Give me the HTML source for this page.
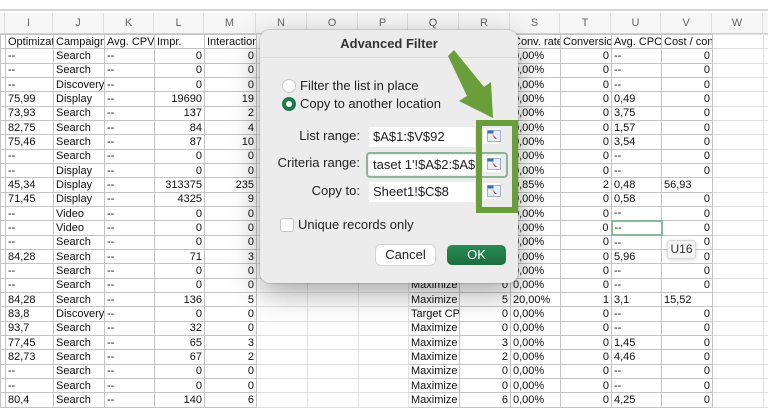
<!DOCTYPE html>
<html><head><meta charset="utf-8"><style>
*{margin:0;padding:0;box-sizing:border-box}
body{width:768px;height:409px;overflow:hidden;background:#fff;font-family:"Liberation Sans",sans-serif;position:relative}
.topbar{position:absolute;left:0;top:0;width:768px;height:11px;background:#fff;border-bottom:2px solid #d6d6d6}
.colh{position:absolute;top:13px;left:0;height:21px;width:768px;background:#f6f6f6;border-bottom:1px solid #d0d0d0}
.colh div{position:absolute;top:0;height:21px;line-height:21px;text-align:center;font-size:11px;color:#666;border-right:1px solid #dcdcdc}
table{position:absolute;left:0;top:34px;width:768px;border-collapse:collapse;table-layout:fixed;font-size:11px;color:#111}
td{height:14.33px;border:1px solid #c4c4c4;white-space:nowrap;overflow:hidden;padding:0 2px;line-height:12px}
td.r{text-align:right}
td.e{border-color:#e2e2e2}
.dlg{position:absolute;left:260px;top:30px;width:258px;height:253px;background:#ececec;border-radius:10px;box-shadow:0 10px 30px rgba(0,0,0,.35),0 0 0 1px rgba(0,0,0,.12)}
.t{position:absolute;font-size:13px;color:#222;white-space:nowrap}
.inp{position:absolute;background:#fff;height:20px;font-size:13px;line-height:20px;padding-left:4px;color:#222;overflow:hidden;white-space:nowrap}
.ib{position:absolute;width:18px;height:16px;background:#fff;border-radius:2px}
</style></head><body>
<div class="topbar"></div>
<div class="colh">
<div style="left:0;width:5px"></div>
<div style="left:5px;width:48px">I</div><div style="left:53px;width:51px">J</div><div style="left:104px;width:50px">K</div><div style="left:154px;width:50px">L</div><div style="left:204px;width:52px">M</div><div style="left:256px;width:51px">N</div><div style="left:307px;width:51px">O</div><div style="left:358px;width:50px">P</div><div style="left:408px;width:51px">Q</div><div style="left:459px;width:51px">R</div><div style="left:510px;width:50px">S</div><div style="left:560px;width:51px">T</div><div style="left:611px;width:50px">U</div><div style="left:661px;width:51px">V</div><div style="left:712px;width:51px">W</div>
</div>
<table>
<colgroup><col style="width:5px"><col style="width:48px"><col style="width:51px"><col style="width:50px"><col style="width:50px"><col style="width:52px"><col style="width:51px"><col style="width:51px"><col style="width:50px"><col style="width:51px"><col style="width:51px"><col style="width:50px"><col style="width:51px"><col style="width:50px"><col style="width:51px"><col style="width:51px"><col style="width:5px"></colgroup>
<tr><td></td><td>Optimization</td><td>Campaign type</td><td>Avg. CPV</td><td>Impr.</td><td>Interactions</td><td class="e"></td><td class="e"></td><td class="e"></td><td>Bid strategy</td><td>Conversions</td><td>Conv. rate</td><td>Conversions</td><td>Avg. CPC</td><td>Cost / conv.</td><td class="e"></td><td class="e"></td></tr>
<tr><td></td><td>--</td><td>Search</td><td>--</td><td class="r">0</td><td class="r">0</td><td class="e"></td><td class="e"></td><td class="e"></td><td>Maximize C</td><td class="r">0</td><td>0,00%</td><td class="r">0</td><td>--</td><td class="r">0</td><td class="e"></td><td class="e"></td></tr>
<tr><td></td><td>--</td><td>Search</td><td>--</td><td class="r">0</td><td class="r">0</td><td class="e"></td><td class="e"></td><td class="e"></td><td>Maximize C</td><td class="r">0</td><td>0,00%</td><td class="r">0</td><td>--</td><td class="r">0</td><td class="e"></td><td class="e"></td></tr>
<tr><td></td><td>--</td><td>Discovery</td><td>--</td><td class="r">0</td><td class="r">0</td><td class="e"></td><td class="e"></td><td class="e"></td><td>Maximize C</td><td class="r">0</td><td>0,00%</td><td class="r">0</td><td>--</td><td class="r">0</td><td class="e"></td><td class="e"></td></tr>
<tr><td></td><td>75,99</td><td>Display</td><td>--</td><td class="r">19690</td><td class="r">19</td><td class="e"></td><td class="e"></td><td class="e"></td><td>Maximize C</td><td class="r">0</td><td>0,00%</td><td class="r">0</td><td>0,49</td><td class="r">0</td><td class="e"></td><td class="e"></td></tr>
<tr><td></td><td>73,93</td><td>Search</td><td>--</td><td class="r">137</td><td class="r">2</td><td class="e"></td><td class="e"></td><td class="e"></td><td>Maximize C</td><td class="r">0</td><td>0,00%</td><td class="r">0</td><td>3,75</td><td class="r">0</td><td class="e"></td><td class="e"></td></tr>
<tr><td></td><td>82,75</td><td>Search</td><td>--</td><td class="r">84</td><td class="r">4</td><td class="e"></td><td class="e"></td><td class="e"></td><td>Maximize C</td><td class="r">0</td><td>0,00%</td><td class="r">0</td><td>1,57</td><td class="r">0</td><td class="e"></td><td class="e"></td></tr>
<tr><td></td><td>75,46</td><td>Search</td><td>--</td><td class="r">87</td><td class="r">10</td><td class="e"></td><td class="e"></td><td class="e"></td><td>Maximize C</td><td class="r">0</td><td>0,00%</td><td class="r">0</td><td>3,54</td><td class="r">0</td><td class="e"></td><td class="e"></td></tr>
<tr><td></td><td>--</td><td>Search</td><td>--</td><td class="r">0</td><td class="r">0</td><td class="e"></td><td class="e"></td><td class="e"></td><td>Maximize C</td><td class="r">0</td><td>0,00%</td><td class="r">0</td><td>--</td><td class="r">0</td><td class="e"></td><td class="e"></td></tr>
<tr><td></td><td>--</td><td>Display</td><td>--</td><td class="r">0</td><td class="r">0</td><td class="e"></td><td class="e"></td><td class="e"></td><td>Maximize C</td><td class="r">0</td><td>0,00%</td><td class="r">0</td><td>--</td><td class="r">0</td><td class="e"></td><td class="e"></td></tr>
<tr><td></td><td>45,34</td><td>Display</td><td>--</td><td class="r">313375</td><td class="r">235</td><td class="e"></td><td class="e"></td><td class="e"></td><td>Maximize C</td><td class="r">2</td><td>0,85%</td><td class="r">2</td><td>0,48</td><td>56,93</td><td class="e"></td><td class="e"></td></tr>
<tr><td></td><td>71,45</td><td>Display</td><td>--</td><td class="r">4325</td><td class="r">9</td><td class="e"></td><td class="e"></td><td class="e"></td><td>Maximize C</td><td class="r">0</td><td>0,00%</td><td class="r">0</td><td>0,58</td><td class="r">0</td><td class="e"></td><td class="e"></td></tr>
<tr><td></td><td>--</td><td>Video</td><td>--</td><td class="r">0</td><td class="r">0</td><td class="e"></td><td class="e"></td><td class="e"></td><td>Maximize C</td><td class="r">0</td><td>0,00%</td><td class="r">0</td><td>--</td><td class="r">0</td><td class="e"></td><td class="e"></td></tr>
<tr><td></td><td>--</td><td>Video</td><td>--</td><td class="r">0</td><td class="r">0</td><td class="e"></td><td class="e"></td><td class="e"></td><td>Maximize C</td><td class="r">0</td><td>0,00%</td><td class="r">0</td><td style="border:2px solid #8ab89a">--</td><td class="r">0</td><td class="e"></td><td class="e"></td></tr>
<tr><td></td><td>--</td><td>Search</td><td>--</td><td class="r">0</td><td class="r">0</td><td class="e"></td><td class="e"></td><td class="e"></td><td>Maximize C</td><td class="r">0</td><td>0,00%</td><td class="r">0</td><td>--</td><td class="r">0</td><td class="e"></td><td class="e"></td></tr>
<tr><td></td><td>84,28</td><td>Search</td><td>--</td><td class="r">71</td><td class="r">3</td><td class="e"></td><td class="e"></td><td class="e"></td><td>Maximize C</td><td class="r">0</td><td>0,00%</td><td class="r">0</td><td>5,96</td><td class="r">0</td><td class="e"></td><td class="e"></td></tr>
<tr><td></td><td>--</td><td>Search</td><td>--</td><td class="r">0</td><td class="r">0</td><td class="e"></td><td class="e"></td><td class="e"></td><td>Maximize C</td><td class="r">0</td><td>0,00%</td><td class="r">0</td><td>--</td><td class="r">0</td><td class="e"></td><td class="e"></td></tr>
<tr><td></td><td>--</td><td>Search</td><td>--</td><td class="r">0</td><td class="r">0</td><td class="e"></td><td class="e"></td><td class="e"></td><td>Maximize c</td><td class="r">0</td><td>0,00%</td><td class="r">0</td><td>--</td><td class="r">0</td><td class="e"></td><td class="e"></td></tr>
<tr><td></td><td>84,28</td><td>Search</td><td>--</td><td class="r">136</td><td class="r">5</td><td class="e"></td><td class="e"></td><td class="e"></td><td>Maximize C</td><td class="r">5</td><td>20,00%</td><td class="r">1</td><td>3,1</td><td>15,52</td><td class="e"></td><td class="e"></td></tr>
<tr><td></td><td>83,8</td><td>Discovery</td><td>--</td><td class="r">0</td><td class="r">0</td><td class="e"></td><td class="e"></td><td class="e"></td><td>Target CPA</td><td class="r">0</td><td>0,00%</td><td class="r">0</td><td>--</td><td class="r">0</td><td class="e"></td><td class="e"></td></tr>
<tr><td></td><td>93,7</td><td>Search</td><td>--</td><td class="r">32</td><td class="r">0</td><td class="e"></td><td class="e"></td><td class="e"></td><td>Maximize C</td><td class="r">0</td><td>0,00%</td><td class="r">0</td><td>--</td><td class="r">0</td><td class="e"></td><td class="e"></td></tr>
<tr><td></td><td>77,45</td><td>Search</td><td>--</td><td class="r">65</td><td class="r">3</td><td class="e"></td><td class="e"></td><td class="e"></td><td>Maximize C</td><td class="r">3</td><td>0,00%</td><td class="r">0</td><td>1,45</td><td class="r">0</td><td class="e"></td><td class="e"></td></tr>
<tr><td></td><td>82,73</td><td>Search</td><td>--</td><td class="r">67</td><td class="r">2</td><td class="e"></td><td class="e"></td><td class="e"></td><td>Maximize C</td><td class="r">2</td><td>0,00%</td><td class="r">0</td><td>4,46</td><td class="r">0</td><td class="e"></td><td class="e"></td></tr>
<tr><td></td><td>--</td><td>Search</td><td>--</td><td class="r">0</td><td class="r">0</td><td class="e"></td><td class="e"></td><td class="e"></td><td>Maximize c</td><td class="r">0</td><td>0,00%</td><td class="r">0</td><td>--</td><td class="r">0</td><td class="e"></td><td class="e"></td></tr>
<tr><td></td><td>--</td><td>Search</td><td>--</td><td class="r">0</td><td class="r">0</td><td class="e"></td><td class="e"></td><td class="e"></td><td>Maximize c</td><td class="r">0</td><td>0,00%</td><td class="r">0</td><td>--</td><td class="r">0</td><td class="e"></td><td class="e"></td></tr>
<tr><td></td><td>80,4</td><td>Search</td><td>--</td><td class="r">140</td><td class="r">6</td><td class="e"></td><td class="e"></td><td class="e"></td><td>Maximize C</td><td class="r">6</td><td>0,00%</td><td class="r">0</td><td>4,25</td><td class="r">0</td><td class="e"></td><td class="e"></td></tr>
</table>
<div style="position:absolute;left:667px;top:240px;width:29px;height:19px;background:#f4f4f4;border:1px solid #d8d8d8;border-radius:3px;font-size:12px;line-height:17px;text-align:center;color:#333;box-shadow:0 1px 4px rgba(0,0,0,.15)">U16</div>

<div class="dlg">
  <div class="t" style="left:0;width:258px;text-align:center;top:6px;font-weight:bold;color:#333">Advanced Filter</div>
  <div style="position:absolute;left:0;top:27px;width:258px;height:1px;background:#d8d8d8"></div>
  <div style="position:absolute;left:22px;top:49px;width:14px;height:14px;border-radius:50%;background:#fff;border:1px solid #c8c8c8"></div>
  <div class="t" style="left:40px;top:48px">Filter the list in place</div>
  <div style="position:absolute;left:22px;top:67px;width:14px;height:14px;border-radius:50%;background:#1f7a4a"></div>
  <div style="position:absolute;left:26px;top:71px;width:6px;height:6px;border-radius:50%;background:#fff"></div>
  <div class="t" style="left:40px;top:66px">Copy to another location</div>
  <div class="t" style="left:0;width:100px;text-align:right;top:98px">List range:</div>
  <div class="t" style="left:0;width:100px;text-align:right;top:125px">Criteria range:</div>
  <div class="t" style="left:0;width:100px;text-align:right;top:153px">Copy to:</div>
  <div class="inp" style="left:109px;top:97px;width:106px">$A$1:$V$92</div>
  <div style="position:absolute;left:106px;top:122px;width:142px;height:26px;border:2px solid #8db496;border-radius:4px"></div>
  <div class="inp" style="left:109px;top:125px;width:106px">taset 1'!$A$2:$A$3</div>
  <div class="inp" style="left:109px;top:152px;width:106px">Sheet1!$C$8</div>
  <div class="ib" style="left:223px;top:98px"></div>
  <div class="ib" style="left:223px;top:126px"></div>
  <div class="ib" style="left:223px;top:153px"></div>
  <div style="position:absolute;left:20px;top:188px;width:14px;height:14px;background:#fff;border:1px solid #c8c8c8;border-radius:3px"></div>
  <div class="t" style="left:38px;top:187px">Unique records only</div>
  <div style="position:absolute;left:116px;top:215px;width:59px;height:20px;background:#fff;border-radius:5px;box-shadow:0 0 0 1px #d4d4d4;font-size:13px;line-height:20px;text-align:center;color:#222">Cancel</div>
  <div style="position:absolute;left:187px;top:215px;width:59px;height:20px;background:linear-gradient(#2a8a55,#1b6e3e);border-radius:5px;font-size:13px;line-height:20px;text-align:center;color:#fff">OK</div>
</div>
<svg style="position:absolute;left:0;top:0" width="768" height="409">
  <g fill="#e8eef8" stroke="#8aa0c0" stroke-width="0.8">
    <rect x="487.5" y="130.5" width="13" height="11"/><rect x="487.5" y="158.5" width="13" height="11"/><rect x="487.5" y="185.5" width="13" height="11"/>
  </g>
  <g fill="#3a6fc0"><rect x="487.5" y="130.5" width="6" height="3"/><rect x="487.5" y="158.5" width="6" height="3"/><rect x="487.5" y="185.5" width="6" height="3"/></g>
  <g fill="#d03030"><path d="M492 134l5 5-2 0z"/><path d="M492 162l5 5-2 0z"/><path d="M492 189l5 5-2 0z"/></g>
  <rect x="479" y="123" width="36" height="87" fill="none" stroke="#6a9e3a" stroke-width="6"/>
  <path d="M448 56 L454 50 L484 87 L491 82 L493 118 L459 101 L467 96 L448 56 Z" fill="#6a9e3a"/>
</svg>
</body></html>
